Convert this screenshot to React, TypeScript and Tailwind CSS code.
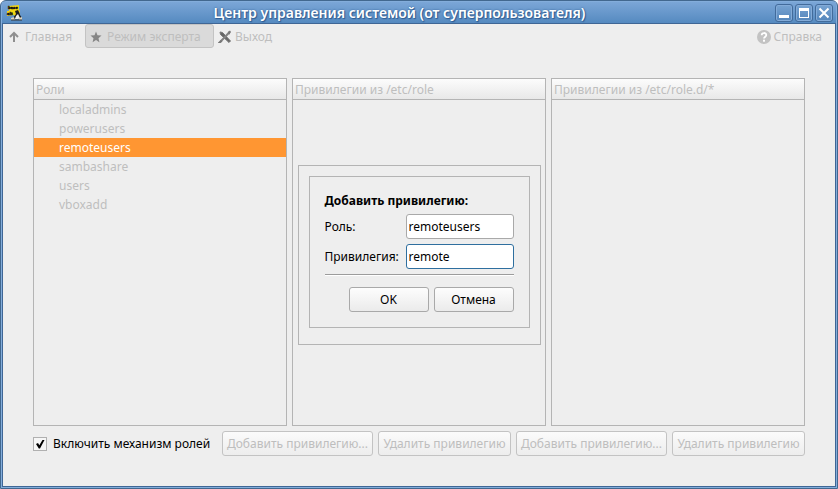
import { useState } from "react";
import type { ReactNode } from "react";

const roles = ["localadmins", "powerusers", "remoteusers", "sambashare", "users", "vboxadd"];

const actions = [
  { id: "role-add", label: "Добавить привилегию...", width: "w-[151px]" },
  { id: "role-remove", label: "Удалить привилегию", width: "w-[133px]" },
  { id: "roled-add", label: "Добавить привилегию...", width: "w-[151px]" },
  { id: "roled-remove", label: "Удалить привилегию", width: "w-[133px]" },
];

function AppLogo() {
  return (
    <svg width="18" height="18" viewBox="0 0 18 18" aria-hidden="true">
      <path d="M2 2 L13 1 L13 6 L14 7 L13 12 L9 12 L8 11 L1 12 L1 7 L3 7 Z" fill="#f2d414" />
      <text x="2" y="5" fontSize="4" fontWeight="900" fill="#111" stroke="#111" strokeWidth="0.4">
        base
      </text>
      <text x="1" y="11" fontSize="4" fontWeight="900" fill="#111" stroke="#111" strokeWidth="0.4">
        alt
      </text>
      <path d="M9 7 L12 6 L13 8 L14 11 L16 14 L15 15 L11 12 L8 16 L7 14 L10 10 Z" fill="#1c1c1c" />
      <path d="M10 12 L12 10 L14 14 L12 15 L9 15 Z" fill="#eeeeee" />
      <path d="M5 14 L8 13 L9 16 L5 16 Z M13 14 L16 13 L16 16 L13 16 Z" fill="#d8d3c2" />
      <path d="M5 16h11" stroke="#333" />
    </svg>
  );
}

function WindowButton({ label, children }: { label: string; children: ReactNode }) {
  return (
    <button
      type="button"
      aria-label={label}
      className="flex h-[18px] w-[18px] items-center justify-center rounded-[3px] border border-[#426b9b] bg-gradient-to-b from-[#77a3d2] to-[#5586bb] shadow-[inset_0_0_0_1px_#83abd8]"
    >
      {children}
    </button>
  );
}

function TitleBar() {
  return (
    <header className="flex h-[22px] items-center border-b border-[#3f6695] bg-gradient-to-b from-[#7ba6d7] to-[#558ac0] pl-1 pr-[3px]">
      <AppLogo />
      <h1 className="flex-1 text-center text-[14px] leading-5 font-semibold text-white [text-shadow:0_0_2px_#2f5c92,1px_1px_1px_#2f5c92]">
        Центр управления системой (от суперпользователя)
      </h1>
      <div className="flex gap-[2px]">
        <WindowButton label="Свернуть">
          <svg width="12" height="12" viewBox="0 0 12 12">
            <rect x="1" y="8" width="10" height="3" fill="#fff" />
          </svg>
        </WindowButton>
        <WindowButton label="Развернуть">
          <svg width="12" height="12" viewBox="0 0 12 12">
            <path d="M1 1h10v10H1z M2 4v6h8V4z" fill="#fff" fillRule="evenodd" />
          </svg>
        </WindowButton>
        <WindowButton label="Закрыть">
          <svg width="12" height="12" viewBox="0 0 12 12">
            <path d="M1.5 1.5l9 9M10.5 1.5l-9 9" stroke="#fff" strokeWidth="2" />
          </svg>
        </WindowButton>
      </div>
    </header>
  );
}

function Toolbar() {
  return (
    <nav className="flex h-6 items-center leading-[18px] text-[#bebebe]">
      <button type="button" disabled className="flex h-6 w-[82px] items-center gap-1 pt-px pl-1">
        <svg width="14" height="14" viewBox="0 0 14 14" aria-hidden="true">
          <path d="M7 12V3.5M3 7l4-4 4 4" fill="none" stroke="#8f8f8f" strokeWidth="2" />
        </svg>
        Главная
      </button>
      <button
        type="button"
        disabled
        className="flex h-6 w-[129px] items-center gap-1 rounded-[3px] border border-[#c3c3c3] bg-[#dadada] pt-px pl-[3px]"
      >
        <svg width="14" height="14" viewBox="0 0 14 14" aria-hidden="true">
          <path
            d="M7 1.500l1.500 3.700 4 .4-3 2.600.9 4L7 10l-3.400 2.200.9-4-3-2.600 4-.4z"
            fill="#858585"
          />
        </svg>
        Режим эксперта
      </button>
      <button type="button" disabled className="flex h-6 items-center gap-[3px] pt-px pl-1">
        <svg width="14" height="14" viewBox="0 0 14 14" aria-hidden="true">
          <path d="M2 2l2.500.5L12.500 11l-1.500 1.500L2.500 4.500z" fill="#666" stroke="#777" />
          <path d="M11.500 2L7.500 6.500 2 12" stroke="#838383" strokeWidth="2" fill="none" />
          <path d="M0 12.500L3 10l1.500 1.500L2.500 13H0z M10 2l2-1.500 1 1.500-2 3z" fill="#777" />
        </svg>
        Выход
      </button>
      <button type="button" disabled className="ml-auto flex h-6 items-center gap-[3px] pt-px pr-[13px]">
        <svg width="14" height="14" viewBox="0 0 14 14" aria-hidden="true">
          <circle cx="7" cy="7" r="7" fill="#c3c3c3" />
          <path
            d="M4.700 5.300C4.700 2.300 9.300 2.300 9.300 5.100 9.300 6.700 7 6.700 7 8.600"
            fill="none"
            stroke="#fff"
            strokeWidth="1.800"
          />
          <rect x="6" y="9.700" width="2" height="2" fill="#fff" />
        </svg>
        Справка
      </button>
    </nav>
  );
}

function Panel({ title, children }: { title: string; children?: ReactNode }) {
  return (
    <section className="border border-[#b4b4b4]">
      <h2 className="h-[21px] border-b border-[#b4b4b4] bg-gradient-to-b from-[#fcfcfc] to-[#e8e8e8] px-[2px] leading-[22px] text-[#bebebe]">
        {title}
      </h2>
      {children}
    </section>
  );
}

function Field({
  id,
  label,
  value,
  onChange,
  active,
}: {
  id: string;
  label: string;
  value: string;
  onChange: (value: string) => void;
  active?: boolean;
}) {
  return (
    <div className="flex items-center justify-between">
      <label htmlFor={id}>{label}</label>
      <input
        id={id}
        type="text"
        value={value}
        onChange={(e) => onChange(e.target.value)}
        className={`h-[25px] w-[108px] rounded-[3px] border bg-white px-[2px] outline-none ${
          active ? "border-[#2f6f9f]" : "border-[#a9a9a9]"
        }`}
      />
    </div>
  );
}

function AddPrivilegeDialog() {
  const [role, setRole] = useState("remoteusers");
  const [privilege, setPrivilege] = useState("remote");
  const button =
    "h-[25px] w-20 rounded-[3px] border border-[#a9a9a9] bg-gradient-to-b from-[#fdfdfd] to-[#ebebeb]";

  return (
    <div
      role="dialog"
      aria-labelledby="dialog-title"
      className="border border-[#b4b4b4] bg-[#eeeeee] px-[10px] pt-[10px] pb-4 text-black"
    >
      <form
        onSubmit={(e) => e.preventDefault()}
        className="flex w-[221px] flex-col gap-[5px] border border-[#b4b4b4] p-[15px]"
      >
        <h2 id="dialog-title" className="leading-[17px] font-bold">
          Добавить привилегию:
        </h2>
        <Field id="role" label="Роль:" value={role} onChange={setRole} />
        <Field id="privilege" label="Привилегия:" value={privilege} onChange={setPrivilege} active />
        <hr className="border-t border-b border-t-[#9c9c9c] border-b-white" />
        <div className="flex justify-end gap-[5px] pt-[6px]">
          <button type="submit" className={button}>
            OK
          </button>
          <button type="button" className={button}>
            Отмена
          </button>
        </div>
      </form>
    </div>
  );
}

export default function App() {
  const [enabled, setEnabled] = useState(true);
  const [selected, setSelected] = useState("remoteusers");

  return (
    <div className="flex min-h-screen flex-col rounded-t-md border border-[#42688f] bg-[#83addb] p-px font-['Noto_Sans',sans-serif] text-[12px] leading-4">
      <TitleBar />
      <main className="relative flex flex-1 flex-col border-x border-b border-[#3f6695] bg-[#eeeeee]">
        <Toolbar />
        <div className="flex flex-1 flex-col gap-[5px] p-[30px]">
          <div className="grid flex-1 grid-cols-3 gap-[5px]">
            <Panel title="Роли">
              <ul role="listbox" aria-label="Роли">
                {roles.map((role) => (
                  <li
                    key={role}
                    role="option"
                    aria-selected={role === selected}
                    onClick={() => setSelected(role)}
                    className={`h-[19px] pl-[25px] leading-[19px] ${
                      role === selected ? "bg-[#ff9632] text-white" : "text-[#bebebe]"
                    }`}
                  >
                    {role}
                  </li>
                ))}
              </ul>
            </Panel>
            <Panel title="Привилегии из /etc/role" />
            <Panel title="Привилегии из /etc/role.d/*" />
          </div>

          <div className="flex items-center gap-[5px]">
            <label className="flex flex-1 items-center gap-[6px] whitespace-nowrap text-black">
              <span className="relative h-[14px] w-[14px]">
                <input
                  type="checkbox"
                  checked={enabled}
                  onChange={(e) => setEnabled(e.target.checked)}
                  className="block h-[14px] w-[14px] appearance-none border border-[#b0b0b0] bg-[#f6f6f6]"
                />
                {enabled && (
                  <svg
                    viewBox="0 0 14 14"
                    className="pointer-events-none absolute inset-0"
                    aria-hidden="true"
                  >
                    <path d="M3 7l2-1 1.300 2.300L9.500 3h2L7 11.500H5.800z" fill="#000" />
                  </svg>
                )}
              </span>
              Включить механизм ролей
            </label>
            {actions.map((action) => (
              <button
                key={action.id}
                type="button"
                disabled
                className={`h-[25px] rounded-[3px] border border-[#c3c3c3] bg-gradient-to-b from-[#fbfbfb] to-[#ededed] whitespace-nowrap text-[#bebebe] ${action.width}`}
              >
                {action.label}
              </button>
            ))}
          </div>
        </div>

        <div className="pointer-events-none absolute inset-0 flex items-center justify-center">
          <div className="pointer-events-auto">
            <AddPrivilegeDialog />
          </div>
        </div>
      </main>
    </div>
  );
}
